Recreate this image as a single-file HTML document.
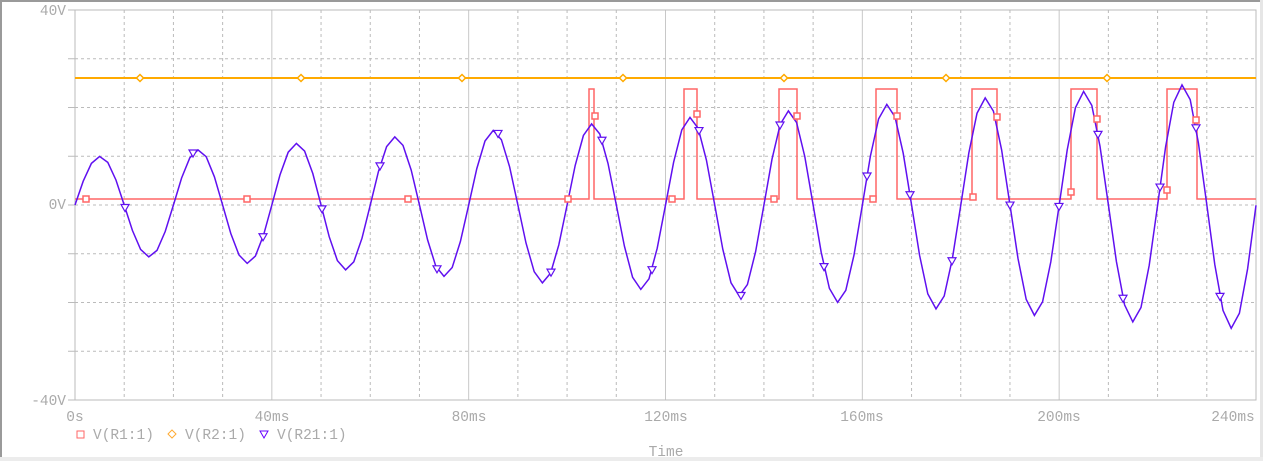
<!DOCTYPE html>
<html><head><meta charset="utf-8"><style>
html,body{margin:0;padding:0;background:#fff;width:1263px;height:461px;overflow:hidden}
svg{display:block}
text{font-family:"Liberation Mono",monospace;font-size:14.5px;fill:#aaa}
</style></head><body>
<svg id="s" width="1263" height="461" xmlns="http://www.w3.org/2000/svg">
<rect x="0" y="0" width="1263" height="461" fill="#fff"/>
<rect x="0" y="0" width="1263" height="2" fill="#9a9a9a"/>
<rect x="0" y="0" width="2" height="461" fill="#9a9a9a"/>
<rect x="1260" y="0" width="3" height="461" fill="#e6e6e6"/>
<rect x="0" y="457" width="1263" height="4" fill="#ececec"/>
<g id="grid"></g>
<rect x="75" y="10" width="1181" height="390" fill="none" stroke="#bbb" stroke-width="1"/>
<text x="66" y="15" text-anchor="end">40V</text>
<text x="66" y="209" text-anchor="end">0V</text>
<text x="66" y="405" text-anchor="end">-40V</text>
<text x="75" y="421" text-anchor="middle">0s</text>
<text x="272" y="421" text-anchor="middle">40ms</text>
<text x="469" y="421" text-anchor="middle">80ms</text>
<text x="666" y="421" text-anchor="middle">120ms</text>
<text x="862" y="421" text-anchor="middle">160ms</text>
<text x="1059" y="421" text-anchor="middle">200ms</text>
<text x="1233" y="421" text-anchor="middle">240ms</text>
<rect x="77" y="431" width="7" height="7" fill="none" stroke="#f66" stroke-width="1"/>
<text x="93" y="439">V(R1:1)</text>
<path d="M172 430 L176 434 L172 438 L168 434 Z" fill="none" stroke="#fa3" stroke-width="1"/>
<text x="185" y="439">V(R2:1)</text>
<path d="M260 431 L268 431 L264 438 Z" fill="none" stroke="#60f" stroke-width="1"/>
<text x="277" y="439">V(R21:1)</text>
<text x="666" y="456" text-anchor="middle">Time</text>
<g id="plot"></g>
</svg>
<script>
var g='',L=75,R=1256,T=10,B=400;
for(var k=1;k<24;k++){var x=L+k*(R-L)/24;
 if(k%4==0) g+='<line x1="'+x+'" y1="'+T+'" x2="'+x+'" y2="'+B+'" stroke="#c8c8c8" stroke-width="1"/>';
 else g+='<line x1="'+x+'" y1="'+T+'" x2="'+x+'" y2="'+B+'" stroke="#bbb" stroke-width="1" stroke-dasharray="3,3"/>';}
for(var k=1;k<8;k++){var y=T+k*(B-T)/8;
 g+='<line x1="'+L+'" y1="'+y+'" x2="'+R+'" y2="'+y+'" stroke="#bbb" stroke-width="1" stroke-dasharray="3,3"/>';}
for(var k=0;k<=8;k++){var y=T+k*(B-T)/8;g+='<line x1="68" y1="'+y+'" x2="75" y2="'+y+'" stroke="#bbb"/>';}
document.getElementById('grid').innerHTML=g;
var P=98.42,Z=205;
function f(x){var A=47+(x-75)*(78/1181);return Z-A*Math.sin(2*Math.PI*(x-75)/P);}
var p='';for(var x=75;x<=1256;x+=8.2){p+=(p?'L':'M')+x.toFixed(1)+' '+f(x).toFixed(1);}
p+='L1256 '+f(1256).toFixed(1);
var s='';
s+='<line x1="75" y1="78" x2="1256" y2="78" stroke="#fa0" stroke-width="2"/>';
[140,301,462,623,784,946,1107].forEach(function(x){s+='<path d="M'+x+' 74.5 L'+(x+3.5)+' 78 L'+x+' 81.5 L'+(x-3.5)+' 78 Z" fill="#fff" stroke="#fa0" stroke-width="1.5"/>';});
var pulses=[[589,594],[684,697],[779,797],[876,897],[972,997],[1071,1097],[1167,1197]];
var r='M75 199';pulses.forEach(function(q){r+='L'+q[0]+' 199L'+q[0]+' 89L'+q[1]+' 89L'+q[1]+' 199';});r+='L1256 199';
s+='<path d="'+r+'" fill="none" stroke="#f66" stroke-width="1.5"/>';
s+='<path d="'+p+'" fill="none" stroke="#6010f0" stroke-width="1.5"/>';
[[86,199],[247,199],[408,199],[568,199],[595,116],[672,199],[697,114],[774,199],[797,116],[873,199],[897,116],[973,197],[997,117],[1071,192],[1097,119],[1167,190],[1196,120]].forEach(function(m){s+='<rect x="'+(m[0]-3)+'" y="'+(m[1]-3)+'" width="6" height="6" fill="#fff" stroke="#f66" stroke-width="1.5"/>';});
[125,193,263,322,380,437,498,551,602,652,699,741,780,824,867,910,952,1010,1059,1098,1123,1160,1196,1220].forEach(function(x){var y=f(x);s+='<path d="M'+(x-4)+' '+(y-3)+' L'+(x+4)+' '+(y-3)+' L'+x+' '+(y+4)+' Z" fill="#fff" stroke="#6010f0" stroke-width="1.2"/>';});
document.getElementById('plot').innerHTML=s;
</script>
</body></html>
